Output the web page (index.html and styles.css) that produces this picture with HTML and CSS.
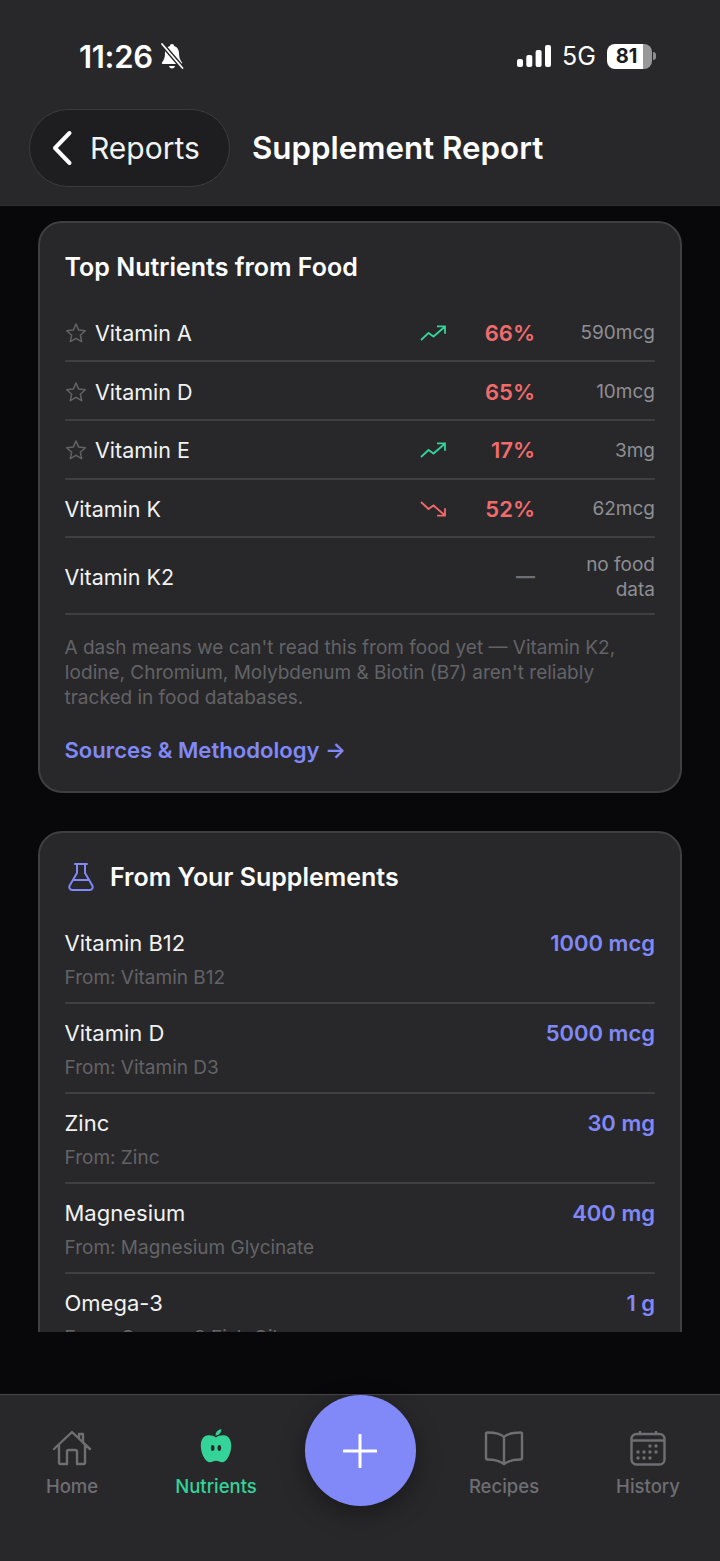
FILE: index.html
```html
<!DOCTYPE html>
<html lang="en">
<head>
    <meta charset="UTF-8">
    <meta name="viewport" content="width=device-width, initial-scale=1.0">
    <title>Supplement Report</title>
    <link rel="stylesheet" href="styles.css">
</head>
<body>
    <header class="top">
        <div class="status">
            <div class="status-left">
                <span class="time">11:26</span>
                <svg class="bell" viewBox="0 0 26 28" width="26" height="28">
                    <path d="M13 2c-1.300 0-2 .8-2.100 1.900C7.600 4.900 6 7.600 6 11c0 4.600-1 7-3 9.500-.5.700 0 1.500.8 1.500h18.400c.8 0 1.300-.8.800-1.500C21 18 20 15.600 20 11c0-3.400-1.600-6.100-4.900-7.100C15 2.800 14.300 2 13 2z" fill="#fff"/>
                    <path d="M10 24h6c-.3 1.500-1.500 2.500-3 2.500s-2.700-1-3-2.500z" fill="#fff"/>
                    <path d="M2.500 1.500l21.500 25" stroke="#28282b" stroke-width="4.500"/>
                    <path d="M3 2l20.500 24" stroke="#fff" stroke-width="1.800" stroke-linecap="round"/>
                </svg>
            </div>
            <div class="status-right">
                <svg class="signal" viewBox="0 0 34 22" width="34" height="22">
                    <rect x="0" y="14" width="6" height="8" rx="2" fill="#fff"/>
                    <rect x="9.300" y="10" width="6" height="12" rx="2" fill="#fff"/>
                    <rect x="18.600" y="5" width="6" height="17" rx="2" fill="#fff"/>
                    <rect x="28" y="0" width="6" height="22" rx="2" fill="#fff"/>
                </svg>
                <span class="net">5G</span>
                <div class="battery"><span class="battery-num">81</span></div>
                <span class="battery-nub"></span>
            </div>
        </div>
        <div class="nav-row">
            <a class="back">
                <svg viewBox="0 0 22 36" width="22" height="36">
                    <path d="M18.500 3L4 18l14.500 15" fill="none" stroke="#fff" stroke-width="4" stroke-linecap="round" stroke-linejoin="round"/>
                </svg>
                <span>Reports</span>
            </a>
            <h1>Supplement Report</h1>
        </div>
    </header>

    <main class="page">
        <div class="scroller">
            <section class="card">
                <h2>Top Nutrients from Food</h2>
                <ul class="food-list">
                    <li class="food-row">
                        <span class="name">
                            <svg class="star" viewBox="0 0 22 22" width="22" height="22"><path d="M11 2l2.700 6.100 6.600.7-5 4.400 1.400 6.500-5.700-3.300-5.700 3.300 1.400-6.500-5-4.400 6.600-.7z" fill="none" stroke="#636366" stroke-width="1.500" stroke-linejoin="round"/></svg>
                            Vitamin A
                        </span>
                        <svg class="trend" viewBox="0 0 26 16" width="26" height="16"><path d="M1 15l7.500-7 5 3.500L24.500 2M17 1.300h8v7.500" fill="none" stroke="#34d399" stroke-width="1.800"/></svg>
                        <span class="pct">66%</span>
                        <span class="val">590mcg</span>
                    </li>
                    <li class="food-row">
                        <span class="name">
                            <svg class="star" viewBox="0 0 22 22" width="22" height="22"><path d="M11 2l2.700 6.100 6.600.7-5 4.400 1.400 6.500-5.700-3.300-5.700 3.300 1.400-6.500-5-4.400 6.600-.7z" fill="none" stroke="#636366" stroke-width="1.500" stroke-linejoin="round"/></svg>
                            Vitamin D
                        </span>
                        <span class="trend"></span>
                        <span class="pct">65%</span>
                        <span class="val">10mcg</span>
                    </li>
                    <li class="food-row">
                        <span class="name">
                            <svg class="star" viewBox="0 0 22 22" width="22" height="22"><path d="M11 2l2.700 6.100 6.600.7-5 4.400 1.400 6.500-5.700-3.300-5.700 3.300 1.400-6.500-5-4.400 6.600-.7z" fill="none" stroke="#636366" stroke-width="1.500" stroke-linejoin="round"/></svg>
                            Vitamin E
                        </span>
                        <svg class="trend" viewBox="0 0 26 16" width="26" height="16"><path d="M1 15l7.500-7 5 3.500L24.500 2M17 1.300h8v7.500" fill="none" stroke="#34d399" stroke-width="1.800"/></svg>
                        <span class="pct">17%</span>
                        <span class="val">3mg</span>
                    </li>
                    <li class="food-row">
                        <span class="name">Vitamin K</span>
                        <svg class="trend" viewBox="0 0 26 16" width="26" height="16"><path d="M1 1l7.500 7 5-3.500L24.500 14M17 14.700h8V7.200" fill="none" stroke="#f26b6b" stroke-width="1.800"/></svg>
                        <span class="pct">52%</span>
                        <span class="val">62mcg</span>
                    </li>
                    <li class="food-row tall">
                        <span class="name">Vitamin K2</span>
                        <span class="trend"></span>
                        <span class="pct none">—</span>
                        <span class="val">no food data</span>
                    </li>
                </ul>
                <p class="note">A dash means we can't read this from food yet — Vitamin K2, Iodine, Chromium, Molybdenum &amp; Biotin (B7) aren't reliably tracked in food databases.</p>
                <a class="link">Sources &amp; Methodology →</a>
            </section>

            <section class="card">
                <div class="card-head">
                    <svg viewBox="0 0 28 30" width="28" height="30">
                        <path d="M8 2h12M10 2v9L2.700 23.500C1.500 25.800 2.800 28 5.300 28h17.400c2.500 0 3.800-2.200 2.600-4.500L18 11V2M6 18h16" fill="none" stroke="#8189f8" stroke-width="2" stroke-linecap="round" stroke-linejoin="round"/>
                    </svg>
                    <h2>From Your Supplements</h2>
                </div>
                <ul class="supp-list">
                    <li class="supp-row">
                        <div class="supp-line"><span>Vitamin B12</span><b>1000 mcg</b></div>
                        <div class="from">From: Vitamin B12</div>
                    </li>
                    <li class="supp-row">
                        <div class="supp-line"><span>Vitamin D</span><b>5000 mcg</b></div>
                        <div class="from">From: Vitamin D3</div>
                    </li>
                    <li class="supp-row">
                        <div class="supp-line"><span>Zinc</span><b>30 mg</b></div>
                        <div class="from">From: Zinc</div>
                    </li>
                    <li class="supp-row">
                        <div class="supp-line"><span>Magnesium</span><b>400 mg</b></div>
                        <div class="from">From: Magnesium Glycinate</div>
                    </li>
                    <li class="supp-row">
                        <div class="supp-line"><span>Omega-3</span><b>1 g</b></div>
                        <div class="from">From: Omega-3 Fish Oil</div>
                    </li>
                </ul>
            </section>
        </div>
    </main>

    <nav class="tabs">
        <a class="tab">
            <svg viewBox="0 0 40 36" width="40" height="36">
                <path d="M2 19L20 2l11 10.500M38 19l-7-6.500V4h-4v4.500M7 15v17.500c0 1 .5 1.500 1.500 1.500H15V21.500c0-1 .5-1.500 1.500-1.500h7c1 0 1.500.5 1.500 1.500V34h6.500c1 0 1.500-.5 1.500-1.500V15" fill="none" stroke="#6e6e73" stroke-width="2.400" stroke-linecap="round" stroke-linejoin="round"/>
            </svg>
            <span>Home</span>
        </a>
        <a class="tab active">
            <svg viewBox="0 0 40 40" width="40" height="40">
                <path d="M20 9c2-1.800 4.500-2.600 8-2.500 5 .2 8 4.700 8 11 0 5-1.600 10-4.200 13.800-1.500 2.200-3.300 3.700-5.300 3.700-2.800 0-3.600-1.700-6.500-1.700s-3.700 1.700-6.500 1.700c-2 0-3.800-1.500-5.300-3.700C5.600 27.500 4 22.500 4 17.500c0-6.300 3-10.800 8-11 3.500-.1 6 .7 8 2.500z" fill="#34d399"/>
                <path d="M19.500 7c-.2-3.400 1.800-6 6-7 .3 3.600-1.800 6.300-6 7z" fill="#34d399"/>
                <ellipse cx="16.500" cy="20" rx="1.900" ry="3.100" fill="#28282b"/>
                <ellipse cx="23.500" cy="20" rx="1.900" ry="3.100" fill="#28282b"/>
            </svg>
            <span>Nutrients</span>
        </a>
        <span class="tab-gap"></span>
        <a class="tab">
            <svg viewBox="0 0 40 36" width="40" height="36">
                <path d="M20 7c-3-3-9-4.500-16.500-4.500-1 0-1.500.5-1.500 1.500v24c0 1 .5 1.500 1.500 1.500C10 29.500 16 31 20 34c4-3 10-4.500 16.500-4.500 1 0 1.500-.5 1.500-1.500V4c0-1-.5-1.500-1.500-1.500C29 2.500 23 4 20 7zm0 0v27" fill="none" stroke="#6e6e73" stroke-width="2.400" stroke-linejoin="round"/>
            </svg>
            <span>Recipes</span>
        </a>
        <a class="tab">
            <svg viewBox="0 0 36 36" width="36" height="36">
                <rect x="1.500" y="4" width="33" height="30.500" rx="5" fill="none" stroke="#6e6e73" stroke-width="2.400"/>
                <path d="M1.500 10.500h33M10 1v3M26 1v3" fill="none" stroke="#6e6e73" stroke-width="2.400"/>
                <g fill="#6e6e73">
                    <circle cx="20" cy="16" r="1.700"/><circle cx="26" cy="16" r="1.700"/>
                    <circle cx="8" cy="22" r="1.700"/><circle cx="14" cy="22" r="1.700"/><circle cx="20" cy="22" r="1.700"/><circle cx="26" cy="22" r="1.700"/>
                    <circle cx="8" cy="28" r="1.700"/><circle cx="14" cy="28" r="1.700"/><circle cx="20" cy="28" r="1.700"/>
                </g>
            </svg>
            <span>History</span>
        </a>
        <button class="fab" aria-label="Add">
            <svg viewBox="0 0 34 34" width="34" height="34"><path d="M17 1v32M1 17h32" stroke="#fff" stroke-width="3" stroke-linecap="round"/></svg>
        </button>
    </nav>
</body>
</html>
```

FILE: styles.css
```css
* {
    box-sizing: border-box;
}

html, body {
    margin: 0;
    padding: 0;
}

body {
    font-family: Inter, "Liberation Sans", sans-serif;
    display: flex;
    flex-direction: column;
    height: 100vh;
    overflow: hidden;
    background-color: #08080b;
    color: #fff;
}

ul {
    list-style: none;
    margin: 0;
    padding: 0;
}

/* header */
.top {
    height: 206px;
    flex-shrink: 0;
    background-color: #28282b;
    border-bottom: 1px solid #2f2f32;
}

.status {
    height: 109px;
    display: flex;
    justify-content: space-between;
    align-items: flex-start;
    padding: 38px 64px 0 79px;
}

.status-left, .status-right {
    display: flex;
    align-items: center;
    height: 36px;
}

.time {
    font-size: 31px;
    font-weight: 600;
    letter-spacing: -0.3px;
}

.bell {
    margin-left: 6px;
}

.net {
    font-size: 25px;
    font-weight: 400;
    margin-left: 11px;
    width: 45px;
}

.battery {
    width: 45px;
    height: 25px;
    border-radius: 8px;
    background: linear-gradient(to right, #fff 0, #fff 81%, #98989b 81%);
    display: flex;
    align-items: center;
    justify-content: center;
    padding-right: 6px;
}

.battery-num {
    color: #1c1c1e;
    font-size: 20px;
    font-weight: 700;
}

.battery-nub {
    width: 3px;
    height: 8px;
    margin-left: 1px;
    border-radius: 0 3px 3px 0;
    background-color: #8e8e91;
}

.nav-row {
    display: flex;
    align-items: center;
    padding-left: 29px;
}

.back {
    width: 201px;
    height: 78px;
    display: flex;
    align-items: center;
    gap: 17px;
    padding-left: 21px;
    border-radius: 39px;
    background-color: #1e1e20;
    border: 1px solid #3c3c3e;
    font-size: 30px;
    color: #f2f2f2;
}

.nav-row h1 {
    margin: 0 0 0 22px;
    font-size: 31.300px;
    font-weight: 600;
}

/* scrolling content */
.page {
    flex: 1;
    min-height: 0;
    padding-bottom: 62px;
}

.scroller {
    height: 100%;
    overflow: hidden;
    padding: 15px 38px 0;
}

.card {
    background-color: #28282b;
    border: 2px solid #3f3f42;
    border-radius: 24px;
    padding: 0 25px 0 24.500px;
    margin-bottom: 38px;
}

.card h2 {
    margin: 0;
    font-size: 25px;
    font-weight: 600;
    line-height: 30px;
}

.card > h2 {
    padding-top: 29px;
    margin-bottom: 21.500px;
}

.card-head {
    display: flex;
    align-items: center;
    gap: 15px;
    padding: 29px 0 21.500px 2.500px;
}

.food-row {
    display: flex;
    align-items: center;
    height: 58.700px;
    padding-top: 2px;
    border-bottom: 2px solid #3f3f42;
    font-size: 21.500px;
}

.food-row.tall {
    height: 77px;
}

.name {
    flex: 1;
    display: flex;
    align-items: center;
    gap: 8.500px;
    color: #f2f2f2;
}

.trend {
    width: 26px;
}

.pct {
    width: 89px;
    text-align: right;
    font-size: 22px;
    font-weight: 600;
    color: #f26b6b;
}

.pct.none {
    color: #6e6e73;
    font-size: 19px;
    font-weight: 700;
}

.val {
    width: 90px;
    margin-left: 30px;
    text-align: right;
    font-size: 19px;
    line-height: 25px;
    color: #8e8e93;
}

.note {
    margin: 20px 0 0;
    font-size: 19px;
    line-height: 25px;
    color: #636366;
}

.link {
    display: block;
    margin: 25px 0 26px;
    font-size: 22.100px;
    line-height: 30px;
    font-weight: 600;
    color: #8189f8;
}

.supp-row {
    height: 90px;
    padding-top: 14px;
    border-bottom: 2px solid #3f3f42;
}

.supp-line {
    display: flex;
    justify-content: space-between;
    align-items: center;
    height: 30px;
    font-size: 22px;
    color: #f2f2f2;
}

.supp-line b {
    font-weight: 600;
    color: #8189f8;
}

.from {
    margin-top: 7px;
    font-size: 19px;
    line-height: 25px;
    color: #636366;
}

/* bottom bar */
.tabs {
    position: relative;
    height: 167px;
    flex-shrink: 0;
    display: grid;
    grid-template-columns: repeat(5, 1fr);
    background-color: #28282b;
    border-top: 1px solid #48484a;
}

.tab {
    display: flex;
    flex-direction: column;
    align-items: center;
    padding-top: 34px;
    font-size: 18.500px;
    font-weight: 500;
    color: #6e6e73;
}

.tab svg {
    height: 38px;
    margin-bottom: 8px;
}

.tab.active {
    color: #34d399;
}

.fab {
    position: absolute;
    left: 304.500px;
    top: 0;
    width: 111px;
    height: 111px;
    padding: 0;
    border: 0;
    border-radius: 50%;
    background-color: #8189f8;
    box-shadow: 0 8px 24px rgba(0, 0, 0, 0.35);
    display: flex;
    align-items: center;
    justify-content: center;
}
```
